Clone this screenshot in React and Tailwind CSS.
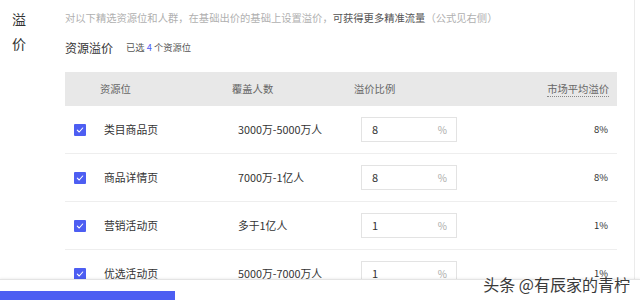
import React from "react";

const rows = [
  { name: "类目商品页", cover: "3000万-5000万人", val: "8", avg: "8%" },
  { name: "商品详情页", cover: "7000万-1亿人", val: "8", avg: "8%" },
  { name: "营销活动页", cover: "多于1亿人", val: "1", avg: "1%" },
  { name: "优选活动页", cover: "5000万-7000万人", val: "1", avg: "1%" },
];

function Check() {
  return (
    <div className="w-[12px] h-[12px] bg-[#4d5ef2] rounded-[1px] flex items-center justify-center shrink-0">
      <svg width="8" height="8" viewBox="0 0 8 8" fill="none">
        <path d="M1.3 4.2 L3.2 6 L6.7 2" stroke="white" strokeWidth="1.1" strokeLinecap="round" strokeLinejoin="round" />
      </svg>
    </div>
  );
}

export default function App() {
  return (
    <div
      className="relative w-[640px] h-[300px] overflow-hidden bg-white"
      style={{ fontFamily: '"Noto Sans CJK SC", "Noto Sans", sans-serif' }}
    >
      <div className="flex h-full">
        <div className="w-[65px] shrink-0 pl-[12px] pt-[7px]">
          <div className="w-[14px] text-[14px] leading-[24px] text-[#333]">溢价</div>
        </div>
        <div className="w-[552px] shrink-0">
          <div className="h-[36px] flex items-center text-[10.3px] text-[#b0b0b0] whitespace-nowrap">
            <span>对以下精选资源位和人群，在基础出价的基础上设置溢价，</span>
            <span className="text-[#555]">可获得更多精准流量</span>
            <span>（公式见右侧）</span>
          </div>
          <div className="h-[24px] flex items-center whitespace-nowrap">
            <span className="text-[12px] text-[#333]">资源溢价</span>
            <span className="ml-[13px] text-[9.3px] text-[#555]">
              已选 <span className="text-[#4d5ef2]">4</span> 个资源位
            </span>
          </div>
          <div className="mt-[12px] h-[34px] bg-[#e8e8e8] flex items-center text-[10.3px] text-[#666] whitespace-nowrap">
            <div className="pl-[35px] w-[167px]">资源位</div>
            <div className="w-[122px]">覆盖人数</div>
            <div className="w-[120px]">溢价比例</div>
            <div className="flex-1 flex justify-end pr-[8px]">
              <span className="border-b border-dotted border-[#888] leading-[14px]">市场平均溢价</span>
            </div>
          </div>
          {rows.map((r, i) => (
            <div
              key={i}
              className="h-[48px] flex items-center border-b border-[#eeeeee] text-[10.8px] text-[#333] whitespace-nowrap"
            >
              <div className="pl-[9px]">
                <Check />
              </div>
              <div className="pl-[18px] w-[152px]">{r.name}</div>
              <div className="w-[123px]">{r.cover}</div>
              <div className="w-[96px] h-[25px] border border-[#e3e3e3] flex items-center justify-between pl-[10px] pr-[9px]">
                <span className="text-[11px] text-[#333]">{r.val}</span>
                <span className="text-[10px] text-[#aaa]">%</span>
              </div>
              <div className="flex-1 text-right pr-[9px] text-[9.5px]">{r.avg}</div>
            </div>
          ))}
        </div>
        <div className="ml-[17px] flex-1 border-l border-[#ebebeb]" />
      </div>

      <div className="absolute left-0 right-0 bottom-0 h-[21px] bg-white border-t border-[#e4e4e4] shadow-[0_-1px_2px_rgba(0,0,0,0.06)]" />
      <div className="absolute left-0 bottom-0 w-[175px] h-[9px] bg-[#4d5ef2]" />
      <div
        className="absolute right-[10px] bottom-[7px] text-[16px] leading-[18px] text-[#3a3a3a] whitespace-nowrap"
        style={{ textShadow: "0 0 2px #fff, 0 0 2px #fff" }}
      >
        头条 @有辰家的青柠
      </div>
    </div>
  );
}
